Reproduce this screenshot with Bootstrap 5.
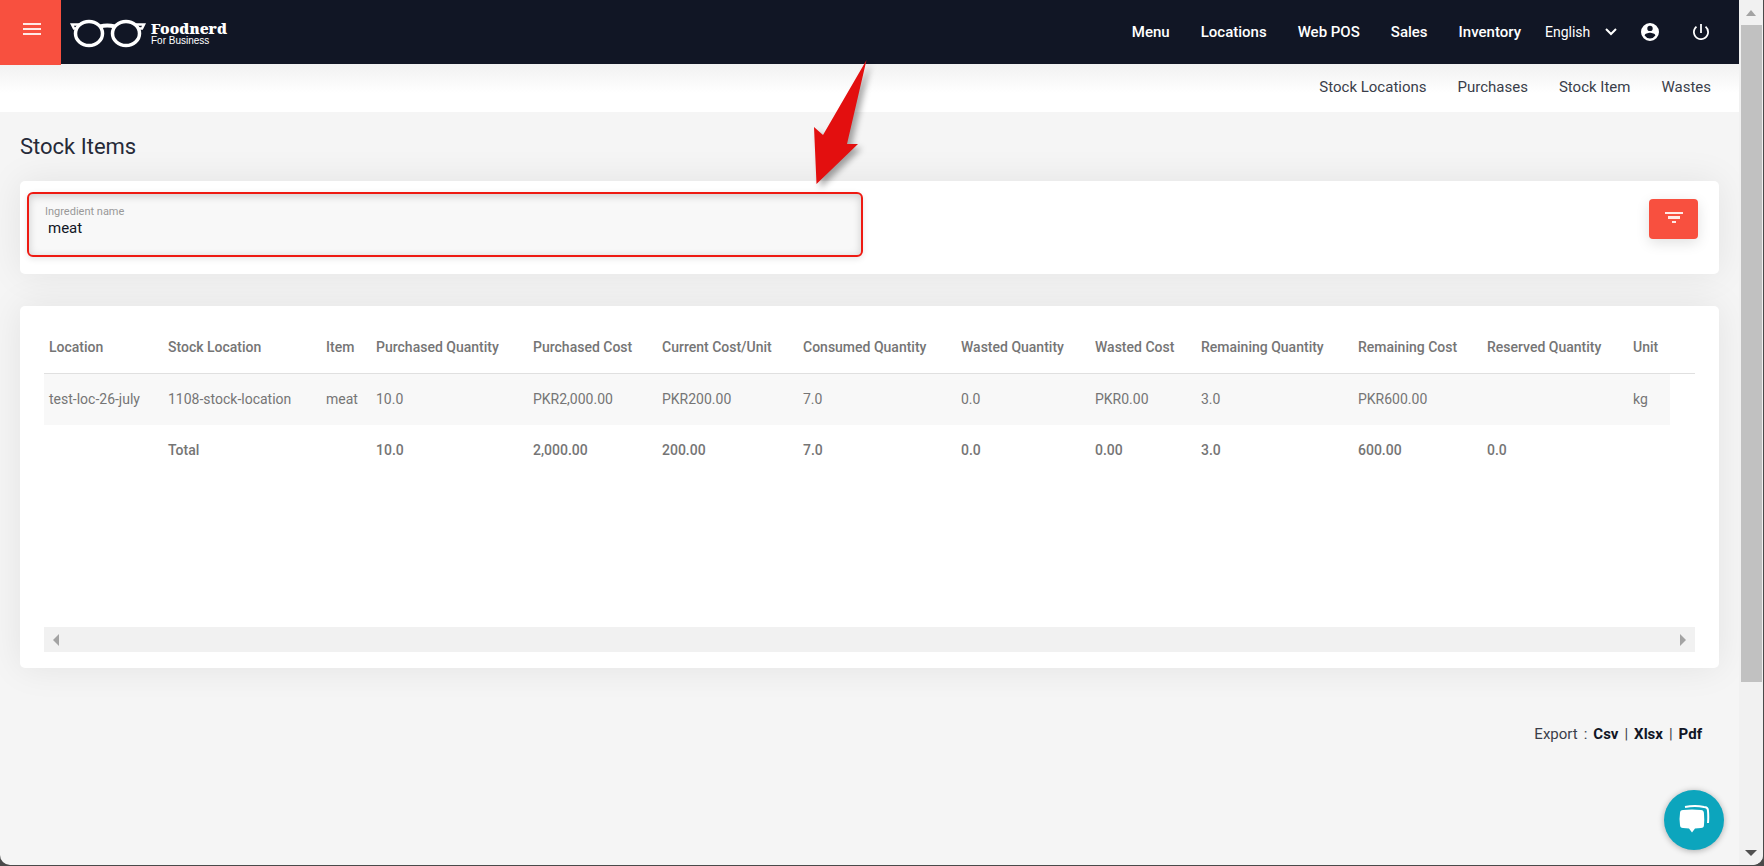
<!DOCTYPE html>
<html lang="en">
<head>
<meta charset="utf-8">
<meta name="viewport" content="width=device-width, initial-scale=1">
<title>Stock Items - Foodnerd For Business</title>
<link href="https://cdn.jsdelivr.net/npm/bootstrap@5.3.0/dist/css/bootstrap.min.css" rel="stylesheet">
<style>
  html, body { height: 100%; }
  body { font-family: Roboto, "Liberation Sans", sans-serif; font-size: 15px; color: #111625; background: #4a4a4a; overflow: hidden; }
  a { color: inherit; text-decoration: none; }
  .window { height: 100vh; padding: 0 1px 1px 0; }
  .window-frame { height: 100%; border-radius: 0 0 10px 10px; overflow: hidden; background: #f5f5f5; }
  .page { min-width: 0; }
  .topbar { height: 64px; background: #111625; color: #fff; position: relative; }
  .menu-btn { width: 61px; height: 65px; background: #f8503f; border: 0; padding: 0 0 9px 3px; }
  .brand-name { font: 900 15px/14px "Noto Serif", "DejaVu Serif", serif; }
  .brand-sub { font: 10px/12px "Liberation Sans", sans-serif; }
  .main-links { gap: 31px; font-weight: 500; }
  .lang { appearance: none; background: transparent; border: 0; color: #fff; font-size: 14px; padding: 0; width: 60px; }
  .icon-btn { background: none; border: 0; padding: 0; color: inherit; line-height: 0; }
  .power { margin: 0 30px 0 34px; }
  .subbar { height: 48px; background: linear-gradient(#f1f1f1, #fff 60%); padding: 0 28px 2px 0; gap: 31px; color: #3a3e4a; }
  .page-title { font-size: 22px; line-height: 28px; font-weight: 400; margin: 21px 0 20px; color: #262a38; }
  .panel { background: #fff; border-radius: 5px; box-shadow: 0 0 36px rgba(0,0,0,.08); }
  .filter-panel { height: 93px; padding: 11px 21px 0 7px; }
  .field { width: 50%; height: 65px; border: 2px solid #ee1a12; border-radius: 6px; background: #f8f8f8; box-shadow: inset 0 2px 8px rgba(0,0,0,.18), 0 2px 6px rgba(0,0,0,.1); padding: 11px 16px 0; }
  .field label { font-size: 11px; line-height: 14px; color: #999; }
  .field input { border: 0; background: transparent; padding: 0 3px; font-size: 15px; line-height: 18px; color: #111625; outline: 0; }
  .filter-btn { width: 49px; height: 40px; margin-top: 7px; border: 0; border-radius: 4px; background: #f8503f; box-shadow: 0 4px 14px rgba(0,0,0,.12); padding: 0 0 3px; }
  .table-panel { margin-top: 32px; padding: 16px 24px; }
  .table-area { height: 305px; }
  .stock { width: 100%; table-layout: fixed; font-size: 14px; line-height: 20px; color: #757575; }
  .stock th, .stock td { padding: 15px 5px 16px; white-space: nowrap; font-weight: 400; }
  .stock thead th { font-weight: 500; border-bottom: 1px solid #e0e0e0; }
  .stock tfoot td { font-weight: 500; }
  .stock tbody td:not(:last-child) { background: #f8f8f8; }
  .w-loc { width: 119px; } .w-stock { width: 158px; } .w-item { width: 50px; } .w-qty { width: 157px; }
  .w-cost { width: 129px; } .w-cur { width: 141px; } .w-wq { width: 134px; } .w-wc { width: 106px; }
  .w-res { width: 146px; } .w-unit { width: 42px; }
  .hscroll { height: 25px; background: #f1f1f1; padding: 0 9px; }
  .export { margin: 56px 17px 0; line-height: 20px; gap: 6px; color: #3a3e4a; }
  .export a { font-weight: 700; color: #111625; }
  .vscroll { width: 24px; background: #f1f1f1; }
  .vthumb { width: 21px; height: 657px; background: #c1c1c1; }
  .arrow { position: absolute; left: 807px; top: 56px; pointer-events: none; filter: drop-shadow(4px 4px 3px rgba(0,0,0,.35)); }
  .chat { position: absolute; right: 39px; bottom: 15px; width: 60px; height: 60px; border: 0; background: #0ca5bd; box-shadow: 0 1px 6px rgba(0,0,0,.3); padding: 0; }
</style>
</head>
<body>
<div class="window">
<div class="window-frame d-flex position-relative">
  <div class="page flex-grow-1">
    <header class="topbar d-flex align-items-center">
      <button class="menu-btn align-self-start flex-shrink-0" aria-label="Open menu">
        <svg width="18" height="12" fill="#ffe9e6"><path d="M0 0h18v2H0zM0 5h18v2H0zM0 10h18v2H0z"/></svg>
      </button>
      <a href="#" class="d-flex align-items-center ms-2 pt-1">
        <svg width="78" height="30" viewBox="0 0 78 30" fill="none" stroke="#fff" stroke-width="3.5">
          <ellipse cx="20" cy="14.500" rx="13.500" ry="12"/><ellipse cx="57" cy="14.500" rx="13.500" ry="12"/>
          <path d="M31 7.500q7-2 15 0" stroke-width="4"/><path d="M8 9.500H5L3 5.500h8M69 9.500h4l2-4h-8" stroke-width="2.500"/>
        </svg>
        <span class="ms-1"><span class="brand-name d-block">Foodnerd</span><span class="brand-sub d-block">For Business</span></span>
      </a>
      <nav class="main-links d-flex ms-auto">
        <a href="#">Menu</a><a href="#">Locations</a><a href="#">Web POS</a><a href="#">Sales</a><a href="#">Inventory</a>
      </nav>
      <div class="d-flex align-items-center ms-4">
        <select class="lang" aria-label="Language"><option>English</option></select>
        <svg width="12" height="8" fill="none" stroke="#fff" stroke-width="2"><path d="M1 1l5 5 5-5"/></svg>
      </div>
      <button class="icon-btn ms-4" aria-label="Account">
        <svg width="18" height="18" viewBox="2 2 20 20" fill="#fff"><path d="M12 2a10 10 0 1 0 0 20 10 10 0 0 0 0-20zm0 3a3 3 0 1 1 0 6 3 3 0 0 1 0-6zm0 14.200a7.200 7.200 0 0 1-6-3.220c.03-1.990 4-3.080 6-3.080s5.970 1.090 6 3.080a7.200 7.200 0 0 1-6 3.220z"/></svg>
      </button>
      <button class="icon-btn power" aria-label="Log out">
        <svg width="16" height="16" viewBox="3 3 18 18" fill="#fff"><path d="M13 3h-2v10h2V3zm4.830 2.170-1.420 1.420A6.920 6.920 0 0 1 19 12a7 7 0 1 1-11.420-5.420L6.170 5.170A9 9 0 1 0 21 12a8.960 8.960 0 0 0-3.170-6.830z"/></svg>
      </button>
    </header>
    <nav class="subbar d-flex align-items-center justify-content-end">
      <a href="#">Stock Locations</a><a href="#">Purchases</a><a href="#">Stock Item</a><a href="#">Wastes</a>
    </nav>
    <main class="px-3 mx-1">
      <h1 class="page-title">Stock Items</h1>
      <form class="panel filter-panel d-flex justify-content-between align-items-start">
        <div class="field d-flex flex-column">
          <label for="ingredient">Ingredient name</label>
          <input id="ingredient" type="text" value="meat">
        </div>
        <button type="button" class="filter-btn" aria-label="Filter">
          <svg width="18" height="12" fill="#ffe9e6"><path d="M0 0h18v2H0zM3 4h12v3H3zM7 9h4v2H7z"/></svg>
        </button>
      </form>
      <section class="panel table-panel">
        <div class="table-area">
          <table class="stock">
            <colgroup><col class="w-loc"><col class="w-stock"><col class="w-item"><col class="w-qty"><col class="w-cost"><col class="w-cur"><col class="w-stock"><col class="w-wq"><col class="w-wc"><col class="w-qty"><col class="w-cost"><col class="w-res"><col class="w-unit"><col></colgroup>
            <thead><tr><th>Location</th><th>Stock Location</th><th>Item</th><th>Purchased Quantity</th><th>Purchased Cost</th><th>Current Cost/Unit</th><th>Consumed Quantity</th><th>Wasted Quantity</th><th>Wasted Cost</th><th>Remaining Quantity</th><th>Remaining Cost</th><th>Reserved Quantity</th><th>Unit</th><th></th></tr></thead>
            <tbody><tr><td>test-loc-26-july</td><td>1108-stock-location</td><td>meat</td><td>10.0</td><td>PKR2,000.00</td><td>PKR200.00</td><td>7.0</td><td>0.0</td><td>PKR0.00</td><td>3.0</td><td>PKR600.00</td><td></td><td>kg</td><td></td></tr></tbody>
            <tfoot><tr><td></td><td>Total</td><td></td><td>10.0</td><td>2,000.00</td><td>200.00</td><td>7.0</td><td>0.0</td><td>0.00</td><td>3.0</td><td>600.00</td><td>0.0</td><td></td><td></td></tr></tfoot>
          </table>
        </div>
        <div class="hscroll d-flex justify-content-between align-items-center">
          <svg width="6" height="12" fill="#a3a3a3"><path d="M6 0v12L0 6z"/></svg>
          <svg width="6" height="12" fill="#a3a3a3"><path d="M0 0v12l6-6z"/></svg>
        </div>
      </section>
      <div class="export d-flex justify-content-end"><span>Export</span><span>:</span><a href="#">Csv</a><span>|</span><a href="#">Xlsx</a><span>|</span><a href="#">Pdf</a></div>
    </main>
  </div>
  <div class="vscroll d-flex flex-column align-items-center flex-shrink-0">
    <svg class="flex-shrink-0" width="10" height="25"><path d="M5 10l5 6H0z" fill="#a3a3a3"/></svg>
    <div class="vthumb"></div>
    <svg class="mt-auto mb-2 flex-shrink-0" width="12" height="7"><path d="M0 0h12L6 6z" fill="#505050"/></svg>
  </div>
  <svg class="arrow" width="64" height="132"><path d="M59.500 4L16 79 7 71 9.500 128 51 88H40z" fill="#e30f0f"/></svg>
  <button class="chat rounded-circle" aria-label="Chat">
    <svg width="32" height="30" fill="#fff"><path d="M5 5q9-1 18 0 3 0 3 4 .5 6 0 11 0 3-3 3l-6 .500-3 4-3-4-6-.500q-3 0-3-3Q1 14 2 8q0-3 3-3z"/><path d="M7 2q10-2 19 0 4 0 4 4 .5 6 0 12" fill="none" stroke="#fff" stroke-width="2"/></svg>
  </button>
</div>
</div>
<script src="https://cdn.jsdelivr.net/npm/bootstrap@5.3.0/dist/js/bootstrap.bundle.min.js"></script>
</body>
</html>
